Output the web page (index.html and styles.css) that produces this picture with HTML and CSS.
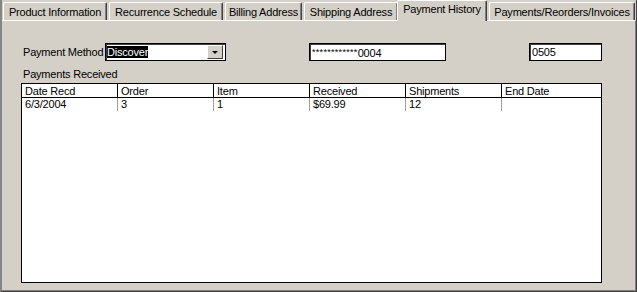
FILE: index.html
```html
<!DOCTYPE html>
<html>

<head>
    <meta charset="UTF-8">
    <title>Payment History</title>
    <link rel="stylesheet" href="styles.css">
</head>

<body>
    <div class="window">
        <ul class="tabs">
            <li class="tab tab-product">Product Information</li>
            <li class="tab tab-recurrence">Recurrence Schedule</li>
            <li class="tab tab-billing">Billing Address</li>
            <li class="tab tab-shipping">Shipping Address</li>
            <li class="tab tab-history active">Payment History</li>
            <li class="tab tab-invoices">Payments/Reorders/Invoices</li>
        </ul>
        <div class="panel">
            <div class="method-row">
                <span class="method-label">Payment Method</span>
                <div class="combo">
                    <span class="combo-text"><span class="selected">Discover</span></span>
                    <span class="combo-btn"><span class="arrow"></span></span>
                </div>
                <div class="field card-field"><span class="stars">************</span>0004</div>
                <div class="field exp-field">0505</div>
            </div>
            <div class="grid-label">Payments Received</div>
            <div class="grid">
                <div class="grid-row grid-head">
                    <span class="cell">Date Recd</span>
                    <span class="cell">Order</span>
                    <span class="cell">Item</span>
                    <span class="cell">Received</span>
                    <span class="cell">Shipments</span>
                    <span class="cell">End Date</span>
                </div>
                <div class="grid-row">
                    <span class="cell">6/3/2004</span>
                    <span class="cell">3</span>
                    <span class="cell">1</span>
                    <span class="cell">$69.99</span>
                    <span class="cell">12</span>
                    <span class="cell"></span>
                </div>
            </div>
        </div>
    </div>
</body>

</html>
```

FILE: styles.css
```css
* {
    padding: 0;
    margin: 0;
    box-sizing: border-box;
}

li {
    list-style: none;
}

body {
    background: #D4D0C8;
    font-family: "Liberation Sans", Arial, sans-serif;
    font-size: 11px;
    line-height: 13px;
    letter-spacing: -0.2px;
    color: #000;
}

.window {
    width: 637px;
    height: 292px;
    border-left: 2px solid #858585;
    border-right: 1px solid #404040;
    border-bottom: 1px solid #404040;
}

/* tab strip */
.tabs {
    display: flex;
    align-items: flex-end;
    height: 20px;
    padding-left: 1px;
}

.tab {
    height: 18px;
    padding-top: 3px;
    margin-right: 2px;
    text-align: center;
    white-space: nowrap;
    border-top: 1px solid #fff;
    border-left: 1px solid #fff;
    border-right: 1px solid #404040;
    border-radius: 2px 2px 0 0;
    box-shadow: inset -1px 0 0 #808080;
}

.tab-product { width: 104px; }
.tab-recurrence { width: 114px; }
.tab-billing { width: 77px; }
.tab-shipping { width: 94px; }
.tab-history { width: 90px; }
.tab-invoices { width: 146px; margin-right: 0; }

.tab.active {
    position: relative;
    z-index: 1;
    height: 21px;
    padding-top: 2px;
    margin-left: -3px;
    margin-bottom: -1px;
    background: #D4D0C8;
}

/* page */
.panel {
    height: 271px;
    padding: 22px 0 0 19px;
    border-top: 1px solid #fff;
    border-right: 1px solid #808080;
    border-bottom: 1px solid #808080;
}

.method-row {
    display: flex;
    align-items: center;
    height: 18px;
}

.method-label {
    width: 84px;
    padding-left: 2px;
    white-space: nowrap;
}

.combo {
    display: flex;
    align-items: center;
    width: 121px;
    height: 18px;
    padding: 1px 2px 1px 1px;
    background: #fff;
    border: 1px solid #000;
    box-shadow: inset 1px 1px 0 #404040;
}

.combo-text {
    flex: 1;
}

.selected {
    background: #000;
    color: #fff;
}

.combo-btn {
    display: flex;
    align-items: center;
    justify-content: center;
    width: 16px;
    height: 14px;
    background: #D4D0C8;
    border-top: 1px solid #fff;
    border-left: 1px solid #fff;
    border-right: 1px solid #404040;
    border-bottom: 1px solid #404040;
}

.arrow {
    width: 0;
    height: 0;
    border-left: 3px solid transparent;
    border-right: 3px solid transparent;
    border-top: 3px solid #000;
}

.field {
    height: 18px;
    padding: 2px 0 0 2px;
    background: #fff;
    border: 1px solid #000;
    box-shadow: inset 1px 1px 0 #404040;
}

.card-field {
    width: 137px;
    margin-left: 83px;
}

.stars {
    font-size: 9px;
    letter-spacing: 0.3px;
    vertical-align: 2px;
}

.exp-field {
    width: 73px;
    margin-left: 83px;
}

.grid-label {
    margin: 7px 0 2px 2px;
}

/* list view */
.grid {
    width: 581px;
    height: 200px;
    background: #fff;
    border: 1px solid #000;
}

.grid-row {
    display: grid;
    grid-template-columns: repeat(5, 96px) 1fr;
}

.cell {
    height: 13px;
    padding-left: 3px;
    border-right: 1px solid #a0a0a0;
    white-space: nowrap;
}

.cell:last-child {
    border-right: 0;
}

.grid-head .cell {
    height: 14px;
    padding-top: 1px;
    border-right-color: #000;
    border-bottom: 1px solid #000;
}
```
